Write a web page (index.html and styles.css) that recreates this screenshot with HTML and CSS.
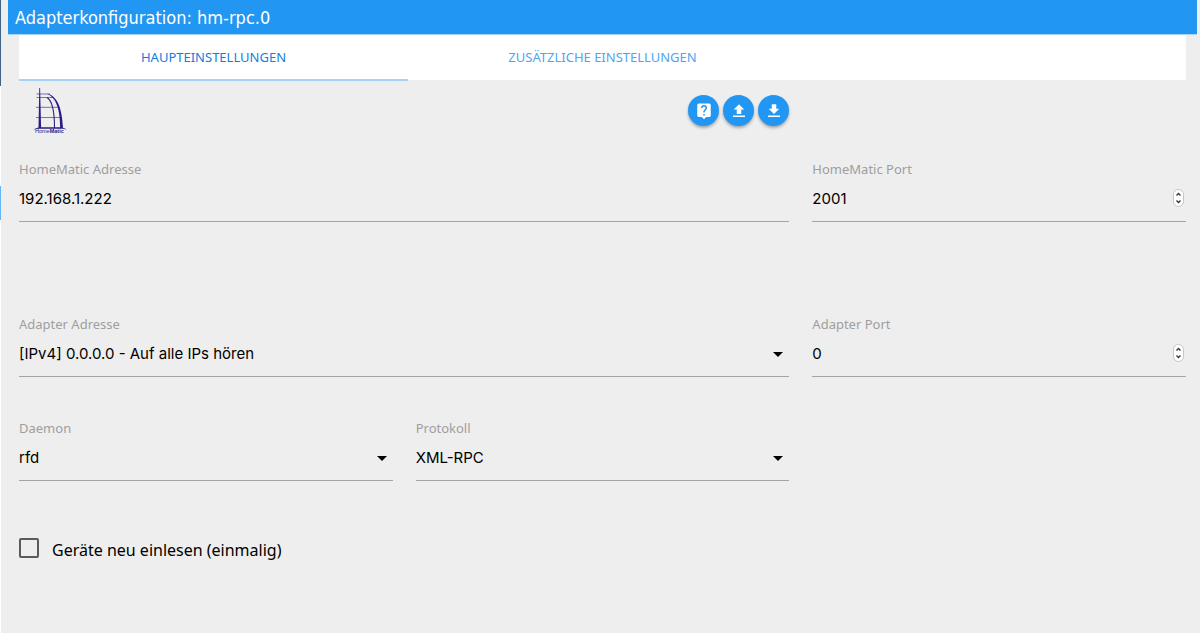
FILE: index.html
```html
<!doctype html>
<html lang="de">
    <head>
        <title>Adapterkonfiguration: hm-rpc.0</title>
        <meta charset="utf-8">
        <meta name="viewport" content="width=device-width, initial-scale=1">
        <link rel="stylesheet" href="styles.css">
    </head>
    <body>
        <div class="backdrop">
            <div class="backdrop-header"></div>
            <div class="backdrop-active"></div>
        </div>
        <div class="dialog">
            <h1 class="title">Adapterkonfiguration: hm-rpc.0</h1>
            <div class="content">
                <nav class="tabs">
                    <a class="tab active" href="#tab-main">Haupteinstellungen</a>
                    <a class="tab" href="#tab-additional">Zusätzliche Einstellungen</a>
                </nav>
                <form id="tab-main">
                    <div class="toolbar">
                        <svg class="logo" viewBox="0 0 34 46" role="img" aria-label="HomeMatic">
                            <g fill="none" stroke="#2d1a87">
                                <path d="M3.500 7H17M3.500 10.500H21M3 20.300H27M3 30.500H29" stroke-width=".6"/>
                                <path d="M14 10.500C20 14 21.500 27 21.500 41" stroke-width="1.100"/>
                            </g>
                            <path fill="#2d1a87" d="M6.300 1H7.100L8.100 41H5.500zM14 6.500C24 9 29 20 30 41H27.200C27 21 23 11 14 6.500zM0 42.500L6 40.300H29L34 42.500L30 41.800H6z"/>
                            <text x="2" y="46" font-size="5.500" fill="#2d1a87">Home<tspan font-weight="bold">Matic</tspan></text>
                        </svg>
                        <div class="actions">
                            <button class="round" type="button" aria-label="Hilfe">
                                <svg viewBox="0 0 24 24"><path d="M19 2H5a2 2 0 0 0-2 2v14c0 1.100.9 2 2 2h4l3 3 3-3h4c1.100 0 2-.9 2-2V4a2 2 0 0 0-2-2zm-6 16h-2v-2h2zm2.100-7.700-.9.900C13.400 11.900 13 12.500 13 14h-2v-.5c0-1.100.4-2.100 1.200-2.800l1.200-1.300c.4-.3.600-.8.600-1.400a2 2 0 1 0-4 0H8a4 4 0 1 1 8 0c0 .9-.4 1.700-.9 2.300z"/></svg>
                            </button>
                            <button class="round" type="button" aria-label="Konfiguration laden">
                                <svg viewBox="0 0 24 24"><path d="M9 16h6v-6h4l-7-7-7 7h4zm-5 2h16v2H4z"/></svg>
                            </button>
                            <button class="round" type="button" aria-label="Konfiguration speichern">
                                <svg viewBox="0 0 24 24"><path d="M19 9h-4V3H9v6H5l7 7zM4 18v2h16v-2z"/></svg>
                            </button>
                        </div>
                    </div>
                    <div class="row row-tall">
                        <div class="field wide">
                            <label for="homematicAddress">HomeMatic Adresse</label>
                            <input id="homematicAddress" type="text" value="192.168.1.222">
                        </div>
                        <div class="field">
                            <label for="homematicPort">HomeMatic Port</label>
                            <input id="homematicPort" type="number" value="2001">
                            <svg class="stepper" viewBox="0 0 11 18"><rect x=".5" y=".5" width="10" height="17" rx="5"/><path d="M3.500 6.500L5.500 4.500L7.500 6.500M3.500 11.500L5.500 13.500L7.500 11.500"/></svg>
                        </div>
                    </div>
                    <div class="row">
                        <div class="field wide">
                            <label for="adapterAddress">Adapter Adresse</label>
                            <select id="adapterAddress">
                                <option>[IPv4] 0.0.0.0 - Auf alle IPs hören</option>
                            </select>
                            <svg class="caret" viewBox="0 0 10 5"><path d="M0 0h10L5 5z"/></svg>
                        </div>
                        <div class="field">
                            <label for="adapterPort">Adapter Port</label>
                            <input id="adapterPort" type="number" value="0">
                            <svg class="stepper" viewBox="0 0 11 18"><rect x=".5" y=".5" width="10" height="17" rx="5"/><path d="M3.500 6.500L5.500 4.500L7.500 6.500M3.500 11.500L5.500 13.500L7.500 11.500"/></svg>
                        </div>
                    </div>
                    <div class="row">
                        <div class="field">
                            <label for="daemon">Daemon</label>
                            <select id="daemon">
                                <option>rfd</option>
                            </select>
                            <svg class="caret" viewBox="0 0 10 5"><path d="M0 0h10L5 5z"/></svg>
                        </div>
                        <div class="field">
                            <label for="protocol">Protokoll</label>
                            <select id="protocol">
                                <option>XML-RPC</option>
                            </select>
                            <svg class="caret" viewBox="0 0 10 5"><path d="M0 0h10L5 5z"/></svg>
                        </div>
                    </div>
                    <div class="check">
                        <input id="forceReInit" type="checkbox">
                        <label for="forceReInit">Geräte neu einlesen (einmalig)</label>
                    </div>
                </form>
            </div>
        </div>
    </body>
</html>
```
FILE: styles.css
```css
* {
    box-sizing: border-box;
}
body {
    display: flex;
    min-height: 100vh;
    margin: 0;
    background-color: #FFFFFF;
    font-family: "Noto Sans", sans-serif;
    color: #000000;
}
/* sliver of the page behind the dialog */
.backdrop {
    width: 1px;
}
.backdrop-header {
    height: 86px;
    margin-bottom: 100px;
    background-color: #3E6288;
}
.backdrop-active {
    height: 34px;
    background-color: #64B5F6;
}
.dialog {
    flex: 1;
    padding: 0 3px 0 7px;
    background-color: #EEEEEE;
}
.title {
    height: 35px;
    margin: 0;
    padding: 0 7px;
    border-bottom: 1px solid #A6D5FA;
    background-color: #2196F3;
    font-family: "DejaVu Sans Condensed", "DejaVu Sans", sans-serif;
    font-size: 18px;
    font-weight: normal;
    line-height: 35px;
    color: #FFFFFF;
}
.content {
    padding: 0 11px;
}
.tabs {
    display: grid;
    grid-template-columns: repeat(3, 1fr);
    height: 45px;
    background-color: #FFFFFF;
}
.tab {
    border-bottom: 2px solid transparent;
    font-size: 13px;
    line-height: 44px;
    text-align: center;
    text-decoration: none;
    text-transform: uppercase;
    color: #4DA6F2;
}
.tab.active {
    border-bottom-color: #A6D2F7;
    color: #0F80E0;
}
.toolbar,
.row {
    display: grid;
    grid-template-columns: repeat(3, 1fr);
    column-gap: 23px;
}
.toolbar {
    height: 79px;
    padding-top: 7px;
}
.logo {
    width: 34px;
    height: 46px;
    margin-left: 14px;
    font-family: "Liberation Sans", sans-serif;
}
.actions {
    display: flex;
    grid-column: 2;
    justify-content: flex-end;
    gap: 4px;
    padding-top: 8px;
}
.round {
    display: flex;
    align-items: center;
    justify-content: center;
    width: 31px;
    height: 31px;
    padding: 0;
    border: none;
    border-radius: 50%;
    background-color: #2196F3;
    box-shadow: 0 2px 3px rgba(0, 0, 0, 0.3);
    cursor: pointer;
}
.round svg {
    width: 18px;
    height: 18px;
    fill: #FFFFFF;
}
.row {
    height: 104px;
}
.row-tall {
    height: 155px;
}
.field {
    position: relative;
}
.wide {
    grid-column: span 2;
}
.field label {
    display: block;
    height: 20px;
    font-size: 13px;
    line-height: 20px;
    color: #9E9E9E;
}
.field input,
.field select {
    display: block;
    width: 100%;
    height: 43px;
    margin: 0;
    padding: 0 0 4px;
    border: none;
    border-bottom: 1px solid #A4A4A4;
    border-radius: 0;
    outline: none;
    background-color: transparent;
    font-family: Inter, sans-serif;
    font-size: 15px;
    color: #000000;
    appearance: none;
}
.field input::-webkit-inner-spin-button {
    display: none;
}
.stepper,
.caret {
    position: absolute;
    pointer-events: none;
}
.stepper {
    top: 30px;
    right: 2px;
    width: 11px;
    height: 18px;
    fill: #FFFFFF;
    stroke: #C4C4C4;
}
.stepper path {
    fill: none;
    stroke: #333333;
    stroke-width: 1.3;
}
.caret {
    top: 38px;
    right: 6px;
    width: 10px;
    height: 5px;
}
.check {
    display: flex;
    align-items: flex-start;
    gap: 13px;
    padding: 16px 0;
}
.check input {
    width: 20px;
    height: 20px;
    margin: 0;
    border: 2px solid #5A5A5A;
    border-radius: 2px;
    appearance: none;
}
.check input:checked {
    background-color: #2196F3;
}
.check label {
    font-size: 16px;
    line-height: 24px;
}
```
